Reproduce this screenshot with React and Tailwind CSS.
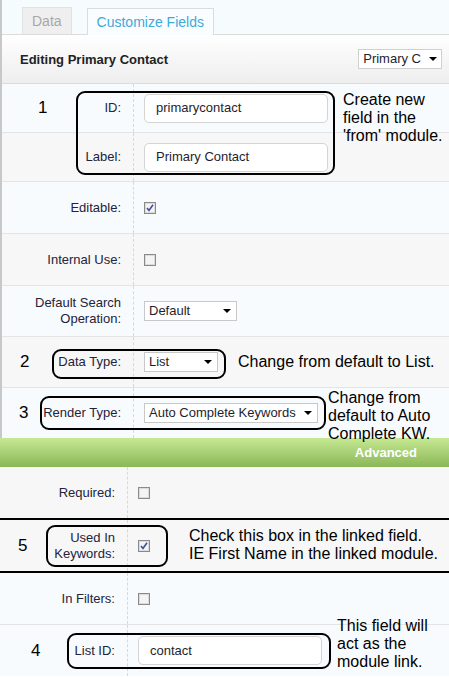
import React from "react";

const font = { fontFamily: '"Liberation Sans", Arial, sans-serif' };

function Checkbox({ checked }) {
  return (
    <svg width="12" height="12" viewBox="0 0 12 12" className="block">
      <rect x="0.5" y="0.5" width="11" height="11" fill="#e8e8e8" stroke="#8a8a8a" />
      <rect x="1.5" y="1.5" width="9" height="9" fill="#f4f4f4" stroke="#dcdcdc" />
      {checked && (
        <path d="M3 6 L5 8.5 L9 2.8" fill="none" stroke="#3a4fa0" strokeWidth="1.6" />
      )}
    </svg>
  );
}

function Select({ value, w }) {
  return (
    <div
      className={`flex items-center justify-between h-[20px] bg-white border border-[#c8c8c8] pl-[4px] pr-[5px] text-[13px] text-[#1e1e2e] ${w}`}
    >
      <span>{value}</span>
      <span className="w-0 h-0 border-l-[4px] border-r-[4px] border-t-[4px] border-l-transparent border-r-transparent border-t-black" />
    </div>
  );
}

function Input({ value, w }) {
  return (
    <div
      className={`flex items-center h-[29px] bg-white border border-[#d4d4d4] rounded-[5px] pl-[11px] text-[13px] text-[#1e1e2e] ${w}`}
    >
      {value}
    </div>
  );
}

// one form row: label cell, dashed divider, value cell
function Row({ h, bg, label, children, lw = "w-[132px]", top = true, extra }) {
  return (
    <div className={`relative flex ${h} ${bg} ${top ? "border-t border-[#e4e4e4]" : ""}`}>
      <div
        className={`${lw} shrink-0 flex items-center justify-end pr-[12px] text-right text-[13px] leading-[16px] text-[#23233a] border-r border-dashed border-[#d8d8d8]`}
      >
        {label}
      </div>
      <div className="flex items-center pl-[10px]">{children}</div>
      {extra}
    </div>
  );
}

function Num({ n, x }) {
  return (
    <div className={`absolute top-0 bottom-0 flex items-center text-[17px] text-black ${x}`}>{n}</div>
  );
}

function Note({ className, children }) {
  return (
    <div className={`absolute z-10 text-[16px] leading-[18px] text-black whitespace-nowrap ${className}`}>
      {children}
    </div>
  );
}

function Box({ className }) {
  return <div className={`absolute z-10 border-2 border-black rounded-[9px] ${className}`} />;
}

export default function App() {
  const blue = "bg-[#f7fbfe]";
  const gray = "bg-[#f7f7f7]";
  return (
    <div style={font} className="w-[449px] h-[677px] overflow-hidden bg-white">
      {/* upper screenshot */}
      <div className="border-l-2 border-[#c8c8c8]">
        {/* tabs */}
        <div className="h-[35px] bg-[#f6fbfe] border-b border-[#dcdcdc] flex items-end pl-[20px] gap-[15px]">
          <div className="h-[27px] px-[9px] flex items-center bg-[#efefef] border border-b-0 border-[#e2e2e2] text-[14px] text-[#a8a8a8]">
            Data
          </div>
          <div className="h-[27px] px-[9px] flex items-center bg-[#fafdff] border border-b-0 border-[#dcdcdc] text-[14px] text-[#3daad8] -mb-px">
            Customize Fields
          </div>
        </div>
        {/* header */}
        <div className="h-[49px] flex items-center justify-between pl-[18px] pr-[7px] bg-gradient-to-b from-[#ffffff] to-[#eeeeee] border-b border-[#dcdcdc]">
          <span className="text-[13px] font-bold text-[#222] pt-[2px]">Editing Primary Contact</span>
          <div className="flex items-center gap-[8px] h-[20px] bg-white border border-[#d0d0d0] pl-[4px] pr-[4px] text-[13px] text-[#1e1e2e]">
            <span>Primary C</span>
            <span className="w-0 h-0 border-l-[4px] border-r-[4px] border-t-[4px] border-l-transparent border-r-transparent border-t-black" />
          </div>
        </div>

        {/* rows 1 and 2 share one note */}
        <div className="relative">
          <Row h="h-[48px]" bg={blue} label="ID:" top={false} extra={<Num n="1" x="left-[36px]" />}>
            <Input value="primarycontact" w="w-[184px]" />
          </Row>
          <Row h="h-[49px]" bg={gray} label="Label:">
            <Input value="Primary Contact" w="w-[184px]" />
          </Row>
          <Box className="left-[74px] top-[7px] w-[259px] h-[84px]" />
          <Note className="left-[341px] top-[7px]">
            Create new
            <br />
            field in the
            <br />
            'from' module.
          </Note>
        </div>

        <Row h="h-[52px]" bg={blue} label="Editable:">
          <Checkbox checked />
        </Row>
        <Row h="h-[52px]" bg={gray} label="Internal Use:">
          <Checkbox />
        </Row>
        <Row
          h="h-[51px]"
          bg={blue}
          label={
            <span>
              Default Search
              <br />
              Operation:
            </span>
          }
        >
          <Select value="Default" w="w-[93px]" />
        </Row>
        <Row
          h="h-[51px]"
          bg={gray}
          label="Data Type:"
          extra={
            <>
              <Num n="2" x="left-[18px]" />
              <Box className="left-[50px] top-[12px] w-[174px] h-[30px]" />
              <Note className="left-[236px] top-[16px]">Change from default to List.</Note>
            </>
          }
        >
          <Select value="List" w="w-[74px]" />
        </Row>
        <Row
          h="h-[51px]"
          bg={blue}
          label="Render Type:"
          extra={
            <>
              <Num n="3" x="left-[17px]" />
              <Box className="left-[38px] top-[8px] w-[286px] h-[34px]" />
              <Note className="left-[326px] top-[1px] leading-[17.5px]">
                Change from
                <br />
                default to Auto
                <br />
                Complete KW.
              </Note>
            </>
          }
        >
          <Select value="Auto Complete Keywords" w="w-[174px]" />
        </Row>
      </div>

      {/* advanced bar */}
      <div className="h-[29px] flex items-center justify-end pr-[32px] bg-gradient-to-b from-[#c6e993] to-[#8bb757] text-[13px] font-bold text-white">
        Advanced
      </div>

      {/* lower screenshot */}
      <Row h="h-[51px]" bg={gray} label="Required:" lw="w-[128px]" top={false}>
        <Checkbox />
      </Row>
      <div className="border-y-2 border-black">
        <Row
          h="h-[51px]"
          bg={gray}
          lw="w-[128px]"
          top={false}
          label={
            <span>
              Used In
              <br />
              Keywords:
            </span>
          }
          extra={
            <>
              <Num n="5" x="left-[18px]" />
              <Box className="left-[46px] top-[5px] w-[122px] h-[42px]" />
              <Note className="left-[189px] top-[7px]">
                Check this box in the linked field.
                <br />
                IE First Name in the linked module.
              </Note>
            </>
          }
        >
          <Checkbox checked />
        </Row>
      </div>
      <Row h="h-[51px]" bg={blue} label="In Filters:" lw="w-[128px]" top={false}>
        <Checkbox />
      </Row>
      <Row
        h="h-[52px]"
        bg={blue}
        label="List ID:"
        lw="w-[128px]"
        extra={
          <>
            <Num n="4" x="left-[31px]" />
            <Box className="left-[67px] top-[8px] w-[264px] h-[36px]" />
            <Note className="left-[337px] top-[-8px]">
              This field will
              <br />
              act as the
              <br />
              module link.
            </Note>
          </>
        }
      >
        <Input value="contact" w="w-[184px]" />
      </Row>
    </div>
  );
}
